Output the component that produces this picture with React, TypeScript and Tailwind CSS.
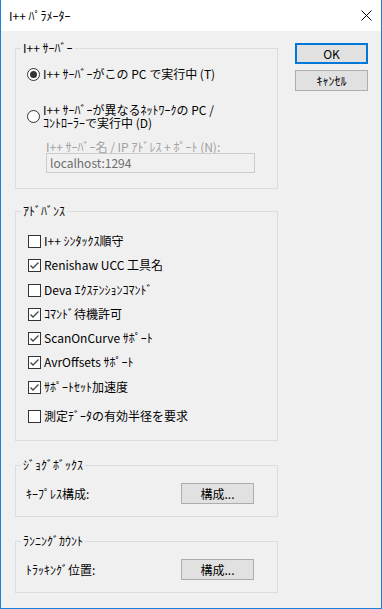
import React from "react";

const Radio = ({ checked }: { checked?: boolean }) => (
  <span className="w-[13px] h-[13px] shrink-0 rounded-full border border-[#333333] bg-white flex items-center justify-center">
    {checked && <span className="w-[7px] h-[7px] rounded-full bg-[#333333]" />}
  </span>
);

const Check = ({ checked }: { checked?: boolean }) => (
  <span className="w-[13px] h-[13px] shrink-0 border border-[#333333] bg-white flex items-center justify-center">
    {checked && (
      <svg width="11" height="11" viewBox="0 0 11 11">
        <path d="M1.5 5.5 L4 8 L9.5 2.5" fill="none" stroke="#444444" strokeWidth="1.3" />
      </svg>
    )}
  </span>
);

const Legend = ({ children }: { children: React.ReactNode }) => (
  <span className="absolute left-[5px] top-[-9px] px-[2px] bg-[#f0f0f0] leading-[16px] whitespace-nowrap">
    {children}
  </span>
);

const Btn = ({ children, primary }: { children: React.ReactNode; primary?: boolean }) => (
  <div
    className={
      "w-[73px] h-[21px] flex items-center justify-center bg-[#e1e1e1] leading-none " +
      (primary ? "border-2 border-[#0078d7]" : "border border-[#adadad]")
    }
  >
    {children}
  </div>
);

const rows: { label: string; checked: boolean; mt: string }[] = [
  { label: "I++ ｼﾝﾀｯｸｽ順守", checked: false, mt: "mt-0" },
  { label: "Renishaw UCC 工具名", checked: true, mt: "mt-[8px]" },
  { label: "Deva ｴｸｽﾃﾝｼｮﾝｺﾏﾝﾄﾞ", checked: false, mt: "mt-[9px]" },
  { label: "ｺﾏﾝﾄﾞ待機許可", checked: true, mt: "mt-[8px]" },
  { label: "ScanOnCurve ｻﾎﾟｰﾄ", checked: true, mt: "mt-[8px]" },
  { label: "AvrOffsets ｻﾎﾟｰﾄ", checked: true, mt: "mt-[8px]" },
  { label: "ｻﾎﾟｰﾄｾｯﾄ加速度", checked: true, mt: "mt-[9px]" },
  { label: "測定ﾃﾞｰﾀの有効半径を要求", checked: false, mt: "mt-[13px]" },
];

export default function App() {
  return (
    <div className="w-[382px] h-[609px] flex flex-col border-x border-b border-[#1883d7] text-[12px] text-black font-['Noto_Sans_CJK_JP','Noto_Sans',sans-serif] overflow-hidden">
      <div className="h-[31px] shrink-0 bg-white flex items-center justify-between pl-[8px] pr-[9px]">
        <span className="leading-[16px]">I++ ﾊﾟﾗﾒｰﾀｰ</span>
        <svg width="11" height="11" viewBox="0 0 11 11">
          <path d="M0.5 0.5 L10.5 10.5 M10.5 0.5 L0.5 10.5" stroke="#000" strokeWidth="1" />
        </svg>
      </div>
      <div className="flex-1 bg-[#f0f0f0] flex pl-[14px]">
        <div className="w-[263px] flex flex-col pt-[17px]">
          {/* I++ server */}
          <div className="relative h-[141px] border border-[#dcdcdc] flex flex-col pl-[11px] pt-[17px]">
            <Legend>I++ ｻｰﾊﾞｰ</Legend>
            <div className="h-[16px] flex items-center gap-[3px]">
              <Radio checked />
              <span className="leading-[16px]">I++ ｻｰﾊﾞｰがこの PC で実行中 (T)</span>
            </div>
            <div className="mt-[21px] flex items-center gap-[3px]">
              <Radio />
              <span className="leading-[13px]">
                I++ ｻｰﾊﾞｰが異なるﾈｯﾄﾜｰｸの PC /
                <br />
                ｺﾝﾄﾛｰﾗｰで実行中 (D)
              </span>
            </div>
            <div className="mt-[12px] pl-[19px] leading-[12px] text-[#a0a0a0] whitespace-nowrap">
              I++ ｻｰﾊﾞｰ名 / IP ｱﾄﾞﾚｽ + ﾎﾟｰﾄ (N):
            </div>
            <div className="ml-[19px] w-[209px] h-[20px] border border-[#cccccc] bg-[#f0f0f0] flex items-center pl-[3px] text-[#6d6d6d]">
              localhost:1294
            </div>
          </div>

          {/* Advance */}
          <div className="relative mt-[22px] h-[230px] border border-[#dcdcdc] flex flex-col pl-[12px] pt-[21px]">
            <Legend>ｱﾄﾞﾊﾞﾝｽ</Legend>
            {rows.map((r) => (
              <div key={r.label} className={"h-[16px] flex items-center gap-[3px] " + r.mt}>
                <Check checked={r.checked} />
                <span className="leading-[16px] whitespace-nowrap">{r.label}</span>
              </div>
            ))}
          </div>

          {/* Jog box */}
          <div className="relative mt-[24px] h-[52px] border border-[#dcdcdc] pl-[10px] pt-[17px]">
            <Legend>ｼﾞｮｸﾞﾎﾞｯｸｽ</Legend>
            <div className="grid grid-cols-[155px_73px] items-center">
              <span className="leading-[16px]">ｷｰﾌﾟﾚｽ構成:</span>
              <Btn>構成...</Btn>
            </div>
          </div>

          {/* Running count */}
          <div className="relative mt-[24px] h-[52px] border border-[#dcdcdc] pl-[10px] pt-[17px]">
            <Legend>ﾗﾝﾆﾝｸﾞｶｳﾝﾄ</Legend>
            <div className="grid grid-cols-[155px_73px] items-center">
              <span className="leading-[16px]">ﾄﾗｯｷﾝｸﾞ位置:</span>
              <Btn>構成...</Btn>
            </div>
          </div>
        </div>

        <div className="ml-[17px] pt-[12px] flex flex-col gap-[6px]">
          <Btn primary>OK</Btn>
          <Btn>ｷｬﾝｾﾙ</Btn>
        </div>
      </div>
    </div>
  );
}
